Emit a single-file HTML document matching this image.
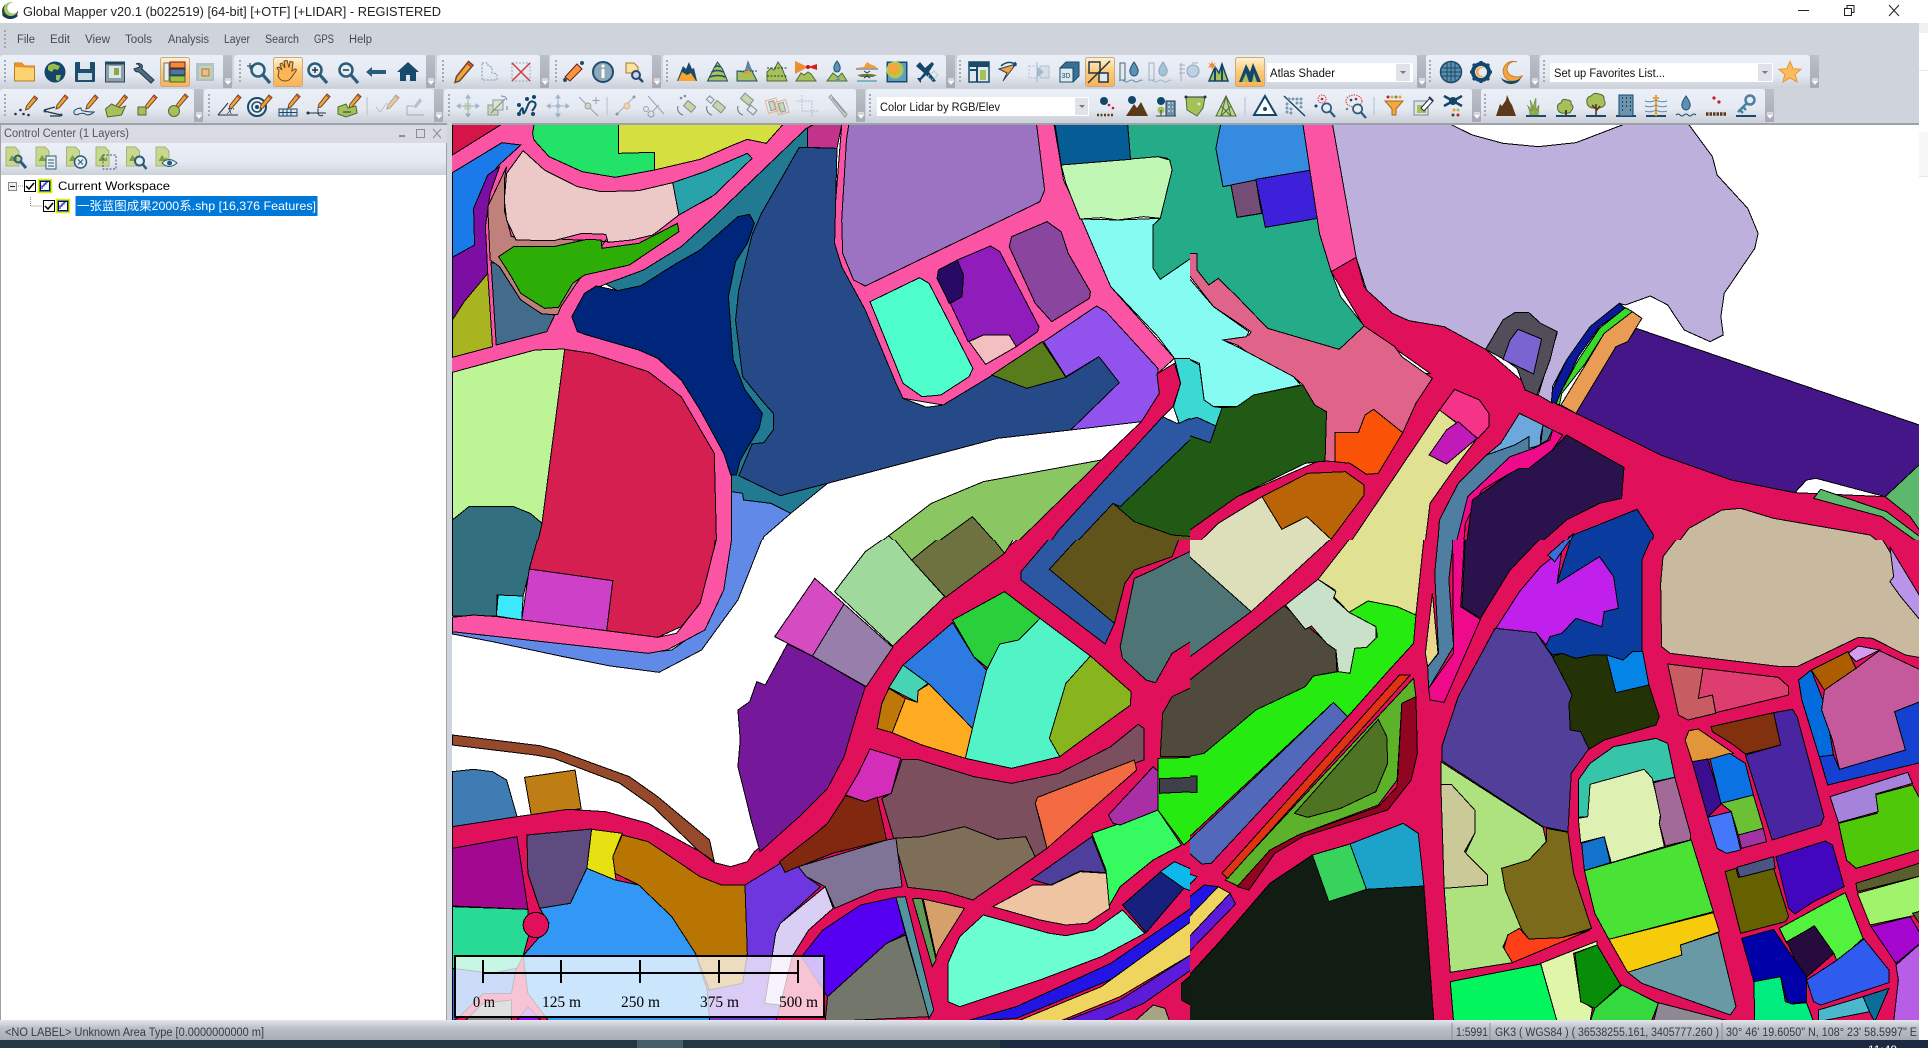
<!DOCTYPE html>
<html><head><meta charset="utf-8"><title>Global Mapper</title>
<style>
html,body{margin:0;padding:0;background:#fff;overflow:hidden}
svg{display:block}
.m polygon,.m ellipse{stroke:#000;stroke-width:1;vector-effect:non-scaling-stroke;shape-rendering:crispEdges}
text{font-family:"Liberation Sans","Noto Sans CJK SC",sans-serif}
.mn{font-size:11.5px;fill:#4a4a4a}
.sb{font-size:11.5px;fill:#3a3a3a}
.sc{font-family:"Liberation Serif",serif;font-size:16px;fill:#000}
</style></head><body>
<svg xmlns="http://www.w3.org/2000/svg" width="1928" height="1048" viewBox="0 0 1928 1048">
<defs>
<linearGradient id="tb" x1="0" y1="0" x2="0" y2="1"><stop offset="0" stop-color="#ebeff8"/><stop offset=".6" stop-color="#e5e9f2"/><stop offset="1" stop-color="#ccd0d9"/></linearGradient>
<linearGradient id="st" x1="0" y1="0" x2="0" y2="1"><stop offset="0" stop-color="#bcc0c9"/><stop offset="1" stop-color="#a6aab4"/></linearGradient>
<linearGradient id="hl" x1="0" y1="0" x2="0" y2="1"><stop offset="0" stop-color="#fff3d2"/><stop offset=".5" stop-color="#fdc878"/><stop offset="1" stop-color="#fbb157"/></linearGradient>
<linearGradient id="sb" x1="0" y1="0" x2="0" y2="1"><stop offset="0" stop-color="#e4e7ec"/><stop offset=".4" stop-color="#bcc0c8"/><stop offset="1" stop-color="#a8acb5"/></linearGradient>
<g id="ar"><rect x="0" y="0" width="9" height="33" fill="url(#st)" rx="1"/><path d="M2 24h6M2.500 26h5l-2.500 3z" fill="#fff" stroke="#fff"/></g>
<g id="p"><path d="M-3 3L5-7l3 2.500L-1 6l-3 1z" fill="#f2a33a" stroke="#6b4a2a"/><path d="M4-6l3 2.500" stroke="#c33" fill="none"/></g>
<g id="mg"><circle cx="-2" cy="-3" r="6.500" fill="#e3edf2" stroke="#2c5c7a" stroke-width="2.500"/><path d="M3 2l7 8" stroke="#2c5c7a" stroke-width="3.200"/></g>
<g id="f"><path d="M-9 8V-11h9l4 4V8z" fill="#c9d88f" stroke="#a3b37a"/><path d="M-6 2l3-5 3 4 2-2v4h-8z" fill="#7f9b45"/></g>
<path id="chk" d="M-4 0l3 3 5-6" fill="none" stroke="#000" stroke-width="1.500"/>
<g id="lay"><rect x="-6.500" y="-6.500" width="13" height="13" fill="#2a8f1e" stroke="#e8e800" stroke-width="1.500"/><rect x="-4.500" y="-4.500" width="9" height="9" fill="#fff" stroke="#0000aa"/><path d="M-3 3V0h2v-2h2v-2h2" fill="none" stroke="#0000aa"/></g>
</defs>

<rect width="1928" height="1048" fill="#fff"/>

<!-- MAP QUADRANT NW -->
<svg class="m" x="450" y="120" width="740" height="430" viewBox="0 0 1568 1290" preserveAspectRatio="none">
<polygon fill="#fb54a5" points="0,14 770,14 560,290 490,380 410,450 330,492 285,520 258,590 270,635 400,690 440,715 490,780 530,870 580,1000 597,1065 597,1290 0,1290"/>
<polygon fill="#fb54a5" points="830,14 1280,14 1300,180 1340,300 1400,500 1535,715 1500,760 1300,770 1150,765 1045,855 960,835 945,790 880,570 830,440 810,370"/>
<polygon fill="#d5154a" points="5,14 108,14 5,105"/>
<polygon fill="#23e268" points="178,14 357,14 357,100 433,97 433,150 350,172 280,155 210,110 178,60 175,40"/>
<polygon fill="#d5e040" points="357,14 705,14 670,70 630,58 600,75 530,118 433,150 433,97 357,100"/>
<polygon fill="#1b7ae9" points="5,158 110,68 150,75 100,140 75,200 50,265 52,375 5,412"/>
<polygon fill="#7d0ea4" points="5,412 52,375 50,265 80,165 105,140 85,220 75,320 80,460 30,545 5,600"/>
<polygon fill="#a8b520" points="5,600 30,545 80,460 90,680 5,712"/>
<polygon fill="#436c8c" points="87,428 100,430 150,540 195,580 222,585 205,635 98,675"/>
<polygon fill="#c0807c" points="120,140 80,260 85,420 105,440 150,540 195,582 228,584 235,560 330,360 530,250 555,230 480,280 340,365 130,350 115,270 115,180"/>
<polygon fill="#ecc9c6" points="155,92 200,150 270,200 320,215 400,212 472,188 485,285 430,345 385,360 335,367 330,343 280,340 220,362 140,360 120,300 115,240 120,160"/>
<polygon fill="#2cae06" points="103,410 135,380 220,380 290,358 320,360 322,385 400,370 482,310 485,335 380,435 285,465 260,490 230,562 200,565 150,520 130,470"/>
<polygon fill="#29a2ab" points="472,188 540,155 630,100 640,115 560,225 485,285"/>
<polygon fill="#217a91" points="755,25 770,14 800,85 800,1090 722,1180 680,1150 622,1140 620,1120 597,1115 597,1065 600,800 355,512 330,492 410,450 490,380 560,290"/>
<polygon fill="#00267c" points="285,520 310,498 355,512 405,497 480,430 530,390 610,290 635,283 645,310 630,370 605,425 590,530 600,720 625,810 662,880 655,925 615,1020 607,1065 595,1065 580,1000 530,870 490,780 440,715 400,690 290,645 270,635 258,590"/>
<polygon fill="#264a88" points="740,82 820,85 815,370 830,440 880,570 945,790 960,835 1010,862 1045,855 1150,765 1222,805 1305,772 1375,710 1418,788 1315,930 1160,955 800,1090 700,1127 612,1067 620,1040 640,972 665,968 685,930 685,880 660,840 620,770 605,600 612,510 640,345 660,280"/>
<polygon fill="#c2338c" points="757,25 770,14 830,14 820,85 757,82"/>
<polygon fill="#9c72c2" points="845,14 1243,14 1260,210 1250,245 1170,300 880,498 855,480 832,400 830,300 840,60"/>
<polygon fill="#8a459f" points="1190,350 1265,305 1295,335 1310,400 1357,515 1355,535 1275,605 1240,550 1185,380"/>
<polygon fill="#901dbb" points="1075,420 1145,378 1165,395 1248,620 1245,635 1200,680 1185,645 1130,645 1098,665 1060,550 1085,530 1085,460"/>
<polygon fill="#270a66" points="1035,450 1075,420 1088,465 1085,530 1058,550 1032,475"/>
<polygon fill="#f3bfc0" points="1100,665 1130,645 1185,645 1200,680 1135,733"/>
<polygon fill="#4effcb" points="890,545 995,473 1015,490 1108,745 1100,770 1040,825 1000,830 960,790"/>
<polygon fill="#587c1c" points="1148,765 1255,665 1305,772 1222,805"/>
<polygon fill="#9152ee" points="1258,665 1370,558 1390,575 1500,745 1503,820 1465,905 1315,930 1418,788 1375,710 1305,770"/>
<polygon fill="#e0105a" points="1498,762 1535,730 1548,790 1532,860 1510,890 1290,1230 1260,1290 1185,1290 1380,1020 1465,905 1503,820"/>
<polygon fill="#2c57a2" points="1510,890 1540,910 1575,890 1575,950 1420,1160 1310,1290 1260,1290 1290,1230"/>
<polygon fill="#205a15" points="1575,950 1575,1250 1530,1245 1450,1205 1405,1150 1420,1160"/>
<polygon fill="#60541a" points="1405,1150 1450,1205 1530,1245 1575,1250 1575,1290 1312,1290"/>
<polygon fill="#86fbf1" points="1338,297 1415,300 1505,295 1490,315 1490,445 1505,478 1575,410 1575,715 1535,715 1500,650 1400,500 1360,370"/>
<polygon fill="#3bd8d4" points="1535,715 1575,715 1575,890 1545,910 1533,860 1548,790"/>
<polygon fill="#24ac88" points="1436,14 1575,14 1575,410 1505,478 1490,445 1490,315 1505,295 1530,150 1520,115 1500,110 1442,118"/>
<polygon fill="#c1f7b5" points="1295,135 1500,110 1525,120 1530,150 1505,295 1470,290 1415,300 1380,293 1335,297 1305,190"/>
<polygon fill="#065c94" points="1282,14 1436,14 1442,118 1295,135"/>
<polygon fill="#bdf495" points="5,757 180,690 243,687 215,1000 195,1210 170,1180 135,1160 70,1160 40,1160 5,1200"/>
<polygon fill="#d41f50" points="243,688 300,700 420,755 490,830 560,1000 565,1290 182,1290 195,1210"/>
<polygon fill="#326f7f" points="5,1200 40,1160 135,1160 170,1180 195,1210 182,1290 5,1290"/>
<polygon fill="#6189e7" points="597,1115 620,1120 622,1140 680,1150 722,1180 665,1250 655,1290 597,1290"/>
<polygon fill="#8ac763" points="890,1290 1020,1150 1130,1085 1380,1020 1185,1290 1170,1290 1107,1190 1010,1290"/>
<polygon fill="#6d7240" points="1010,1290 1107,1190 1170,1290"/>
<polygon fill="#9fd99c" points="890,1290 930,1247 958,1290"/>
</svg>

<!-- MAP QUADRANT NE -->
<svg class="m" x="1190" y="120" width="738" height="430" viewBox="0 0 1568 1290" preserveAspectRatio="none">
<polygon fill="#e0105a" points="300,455 353,412 370,500 430,580 540,620 628,688 740,825 820,880 900,935 1000,1005 1150,1080 1285,1118 1477,1130 1560,1190 1560,1300 -5,1300 -5,1210 100,1130 270,1025 285,1025 290,870 420,770 510,760 370,620"/>
<polygon fill="#24ac88" points="-5,14 65,14 55,85 70,200 87,195 100,292 155,280 160,322 272,295 280,340 300,455 320,530 370,618 317,688 165,625 100,530 60,475 40,495 15,450 15,400 -5,400"/>
<polygon fill="#358bdf" points="65,14 240,14 258,150 70,200 55,85"/>
<polygon fill="#734d75" points="87,195 140,180 152,280 100,292"/>
<polygon fill="#3e20db" points="140,178 258,150 272,295 160,322"/>
<polygon fill="#fb54a5" points="240,14 303,14 353,412 300,455 275,340"/>
<polygon fill="#bdb0dc" points="303,14 555,14 600,45 665,70 740,80 820,68 920,14 1060,14 1110,110 1120,165 1185,265 1207,340 1200,385 1135,520 1128,590 1133,645 1105,665 1050,630 1015,555 978,528 925,555 912,550 850,620 800,720 770,800 770,850 740,825 780,640 745,610 720,578 690,578 665,600 628,688 540,620 465,602 430,580 375,510 353,412"/>
<polygon fill="#514e59" points="628,688 665,600 690,578 720,578 745,610 780,635 765,720 737,825 712,810 695,745 670,720"/>
<polygon fill="#7964d2" points="697,628 747,657 730,762 665,718 680,660"/>
<polygon fill="#0a1a9a" points="770,810 800,720 850,620 912,550 925,565 870,620 825,710 790,810 778,850 768,845"/>
<polygon fill="#37d92a" points="778,850 790,810 825,720 870,625 925,563 940,575 880,640 840,730 790,820 785,855"/>
<polygon fill="#e89c54" points="788,855 840,735 880,640 940,575 960,595 930,665 905,680 820,880"/>
<polygon fill="#451688" points="948,625 1560,920 1560,1020 1477,1130 1330,1075 1310,1080 1285,1118 1150,1080 1000,1005 900,935 820,880 905,680 930,665"/>
<polygon fill="#5cb86a" points="1560,1020 1560,1250 1530,1190 1477,1130"/>
<polygon fill="#5cb86a" points="1340,1108 1480,1175 1560,1260 1560,1280 1470,1190 1325,1135"/>
<polygon fill="#e0648a" points="-5,400 15,400 15,450 40,495 60,475 100,530 165,625 317,688 370,618 435,680 450,710 515,775 480,850 452,938 390,868 372,885 358,937 308,938 308,1025 287,1023 290,875 265,855 240,795 220,770 150,725 100,675 70,660 125,645 130,635 50,560 -5,460"/>
<polygon fill="#86fbf1" points="-5,470 50,560 125,635 120,650 70,660 100,680 220,770 235,795 135,825 100,860 50,860 30,840 20,730 -5,715"/>
<polygon fill="#3bd8d4" points="-5,715 20,735 30,840 50,860 68,863 55,918 15,892 -5,900"/>
<polygon fill="#2c57a2" points="-5,900 15,892 55,918 43,968 -5,945"/>
<polygon fill="#205a15" points="68,863 100,860 135,825 240,795 265,855 290,875 287,1023 245,1030 100,1130 -5,1235 -5,945 43,968"/>
<polygon fill="#fa5207" points="308,938 358,937 372,885 390,868 452,938 400,1060 375,1063 340,1030 308,1025"/>
<polygon fill="#ba6307" points="153,1130 250,1060 330,1055 370,1095 370,1125 300,1258 248,1190 195,1228"/>
<polygon fill="#dcdfb9" points="-5,1300 60,1210 153,1130 195,1228 248,1190 300,1258 280,1300"/>
<polygon fill="#e0e192" points="530,870 610,955 570,1030 510,1150 497,1300 325,1300"/>
<polygon fill="#f43389" points="562,808 615,840 635,880 635,920 612,955 530,870"/>
<polygon fill="#c01ab8" points="545,930 570,905 610,955 545,1032 508,1005"/>
<polygon fill="#6ca8dc" points="700,880 750,915 745,950 745,975 720,985 720,950 690,975 630,1005 660,970"/>
<polygon fill="#4e7fa3" points="770,930 750,915 745,975 720,985 720,950 690,975 630,1005 570,1090 530,1200 525,1300 560,1300 590,1130 680,1010 730,985 760,960"/>
<polygon fill="#ee0a8a" points="770,930 792,945 770,990 720,1045 700,1045 680,1060 620,1110 585,1210 580,1300 560,1300 590,1130 680,1010 730,985 765,960"/>
<polygon fill="#2a134d" points="800,945 922,1042 917,1135 870,1150 800,1200 720,1300 585,1300 600,1140 680,1060 700,1045 720,1045 770,990"/>
<polygon fill="#0a3ca0" points="805,1250 950,1168 985,1245 975,1300 800,1300"/>
<polygon fill="#3a6ed8" points="775,1300 815,1240 800,1300"/>
<polygon fill="#c9b99f" points="1020,1300 1060,1225 1130,1170 1170,1165 1240,1195 1445,1245 1495,1300"/>
</svg>

<!-- MAP QUADRANT SW -->
<svg class="m" x="450" y="540" width="740" height="480" viewBox="0 0 1568 1440" preserveAspectRatio="none">
<rect width="1568" height="1440" fill="#fff"/>
<polygon fill="#326f7f" points="5,-5 186,-5 155,168 100,165 98,228 5,228"/>
<polygon fill="#d41f50" points="186,-5 562,-5 555,100 530,190 490,260 440,292 332,272 345,122 168,87"/>
<polygon fill="#cf40c8" points="168,87 345,122 332,272 152,240"/>
<polygon fill="#3be9fa" points="102,165 155,168 152,240 98,228"/>
<polygon fill="#6189e7" points="5,275 420,338 470,330 530,270 565,180 597,-5 662,-5 610,180 533,330 443,397 340,378 240,350 90,305 5,282"/>
<polygon fill="#fb54a5" points="5,232 50,225 100,230 440,292 480,280 530,190 565,-5 597,-5 580,150 540,270 460,330 420,340 5,275"/>
<polygon fill="#964a2b" points="5,585 190,617 225,630 380,710 440,770 550,900 560,965 530,935 525,930 430,800 360,730 220,655 180,645 5,615"/>
<polygon fill="#3f7cb4" points="5,695 50,688 90,695 120,720 142,830 5,860"/>
<polygon fill="#be7d15" points="158,712 265,690 278,806 172,825"/>
<polygon fill="#e0105a" points="5,860 142,830 250,808 330,815 420,850 530,935 560,968 595,980 630,965 645,935 720,850 780,745 820,650 860,500 890,400 930,315 1040,175 1170,35 1205,-5 1575,-5 1575,1445 5,1445"/>
<polygon fill="#75199a" points="715,312 770,350 880,440 860,530 835,650 800,745 740,830 657,935 640,850 610,680 615,600 610,510 635,485 650,425 668,435"/>
<polygon fill="#d44bc2" points="773,115 835,192 768,348 688,290"/>
<polygon fill="#977eab" points="835,192 938,322 882,440 768,348"/>
<polygon fill="#9fd99c" points="920,-5 940,-5 978,60 1048,170 938,318 815,155 880,35"/>
<polygon fill="#8ac763" points="940,-5 1035,-5 978,60"/>
<polygon fill="#8ac763" points="1150,-5 1195,-5 1175,40"/>
<polygon fill="#6d7240" points="978,60 1035,-5 1150,-5 1175,40 1050,172"/>
<polygon fill="#2c57a2" points="1270,-5 1330,-5 1270,88 1408,250 1388,312 1210,120 1210,95"/>
<polygon fill="#60541a" points="1330,-5 1545,-5 1530,50 1450,90 1430,130 1408,250 1270,88"/>
<polygon fill="#4f7475" points="1450,115 1490,90 1530,60 1575,30 1575,300 1530,340 1495,428 1475,420 1425,355 1420,320"/>
<polygon fill="#4f4a3c" points="1575,440 1530,470 1510,520 1505,650 1575,650"/>
<polygon fill="#2ad03c" points="1065,240 1175,155 1250,235 1205,300 1165,312 1150,397 1110,350"/>
<polygon fill="#2d7be0" points="960,375 1065,248 1110,350 1137,390 1107,565 1015,432"/>
<polygon fill="#47d4b3" points="960,375 1013,430 992,452 990,487 930,443"/>
<polygon fill="#53f3c8" points="1250,235 1357,348 1305,430 1270,595 1292,650 1190,685 1092,655 1107,565 1137,390 1165,312 1205,300"/>
<polygon fill="#88b41e" points="1357,348 1443,455 1442,495 1330,610 1292,650 1270,595 1305,430"/>
<polygon fill="#bf7707" points="930,445 965,475 937,578 905,565 915,490"/>
<polygon fill="#ffab22" points="1015,432 1107,565 1092,655 1000,615 937,578 965,475 990,487 992,452"/>
<polygon fill="#d42dba" points="890,627 955,655 935,760 880,785 838,765 865,700"/>
<polygon fill="#7b4f5e" points="958,658 990,658 1110,710 1190,730 1290,700 1400,620 1458,553 1470,565 1470,660 1250,770 1240,790 1265,925 1240,950 1220,890 1160,898 1090,860 1000,890 940,895 915,775 935,760"/>
<polygon fill="#f46a42" points="1245,772 1450,660 1455,690 1265,925 1250,840 1240,790"/>
<polygon fill="#832810" points="838,767 880,785 905,772 925,900 810,940 710,997 698,965 775,880 800,850"/>
<polygon fill="#7e6e58" points="940,895 1000,890 1090,860 1160,898 1220,890 1240,950 1108,1080 1050,1055 970,1042"/>
<polygon fill="#7f7495" points="925,900 945,895 958,1040 905,1050 815,1105 795,1040 755,1010 738,980"/>
<polygon fill="#6e36df" points="625,1035 700,970 710,997 738,980 755,1010 785,1040 700,1150 690,1180 690,1250 630,1250"/>
<polygon fill="#6e36df" points="630,1250 690,1250 667,1390 700,1395 690,1445 545,1445 545,1350 620,1330"/>
<polygon fill="#d9cff5" points="795,1040 812,1105 760,1170 725,1250 700,1395 667,1390 690,1180 700,1150"/>
<polygon fill="#b87502" points="365,885 420,905 530,1010 575,1035 625,1035 630,1240 620,1330 550,1350 520,1240 470,1130 400,1035 350,1000 345,950"/>
<polygon fill="#e7e012" points="300,868 365,880 345,950 352,1022 290,985"/>
<polygon fill="#5e4c80" points="163,885 300,867 290,985 255,1090 190,1105 165,1000"/>
<polygon fill="#a20890" points="5,925 142,890 165,1108 5,1098"/>
<polygon fill="#27db97" points="5,1100 165,1108 168,1180 155,1247 140,1290 90,1300 5,1285"/>
<polygon fill="#3373e7" points="5,1285 90,1300 140,1285 130,1360 70,1360 20,1430 5,1445"/>
<polygon fill="#3398f5" points="190,1105 255,1090 290,985 350,1020 400,1035 470,1130 520,1240 545,1350 550,1445 210,1445 165,1360 155,1247 190,1190 210,1150"/>
<polygon fill="#848484" points="30,1445 70,1390 130,1380 130,1445"/>
<polygon fill="#8f10f0" points="165,1400 195,1445 140,1445"/>
<ellipse cx="182" cy="1155" rx="27" ry="38" fill="#e0105a"/>
<polygon fill="#5500f0" points="945,1072 965,1180 925,1210 800,1370 745,1250 790,1170 870,1095"/>
<polygon fill="#73766a" points="965,1185 1015,1430 795,1445 800,1370 925,1210"/>
<polygon fill="#50949f" points="945,1072 965,1070 1025,1410 1015,1435"/>
<polygon fill="#5d9a58" points="980,1075 1000,1075 1030,1260 1022,1280"/>
<polygon fill="#d6a06a" points="1003,1077 1090,1105 1035,1230 1030,1250"/>
<polygon fill="#efc4a3" points="1150,1100 1235,1035 1275,1035 1335,995 1392,1000 1398,1105 1350,1150 1305,1155 1250,1140"/>
<polygon fill="#4e3f9d" points="1232,1018 1360,890 1390,998 1335,993 1273,1035"/>
<polygon fill="#35fa60" points="1360,880 1500,810 1550,915 1490,960 1420,1040 1397,1097 1390,990"/>
<polygon fill="#aa2ea6" points="1395,825 1490,680 1505,700 1500,810 1420,855 1405,850"/>
<polygon fill="#26eb10" points="1500,655 1575,652 1575,890 1555,915 1500,810"/>
<polygon fill="#40404a" points="1503,716 1575,712 1575,755 1503,760"/>
<polygon fill="#6bffcf" points="1130,1125 1270,1180 1305,1187 1365,1170 1425,1110 1472,1180 1380,1250 1250,1320 1080,1400 1055,1385 1055,1270 1080,1190"/>
<polygon fill="#17207c" points="1425,1095 1510,990 1555,1045 1475,1178"/>
<polygon fill="#0eb7ec" points="1505,995 1535,965 1575,990 1575,1055 1555,1045"/>
<polygon fill="#2214e4" points="1090,1445 1200,1400 1400,1270 1575,1100 1575,1160 1450,1290 1200,1435"/>
<polygon fill="#efd45e" points="1200,1445 1380,1340 1575,1140 1575,1240 1420,1370 1290,1445"/>
<polygon fill="#5d1ad8" points="1300,1445 1420,1380 1575,1240 1575,1285 1470,1390 1380,1445"/>
<polygon fill="#a5a584" points="1450,1445 1490,1395 1515,1405 1525,1445"/>
<polygon fill="#101b12" points="1575,1300 1550,1330 1550,1380 1575,1400"/>
</svg>

<!-- MAP QUADRANT SE -->
<svg class="m" x="1190" y="540" width="738" height="480" viewBox="0 0 1568 1440" preserveAspectRatio="none">
<rect width="1568" height="1440" fill="#e0105a"/>
<polygon fill="#dcdfb9" points="-5,-5 300,-5 130,215 -5,45"/>
<polygon fill="#4f7475" points="-5,45 130,215 -5,355"/>
<polygon fill="#e0e192" points="340,-5 497,-5 480,225 440,200 378,183 338,217 305,170 308,150 272,118"/>
<polygon fill="#4f4a3c" points="200,197 258,268 310,330 312,395 262,408 245,440 140,510 30,640 -5,650 -5,425"/>
<polygon fill="#26eb10" points="338,217 378,183 440,200 480,225 475,310 420,395 335,530 305,487 -5,895 -5,650 30,640 140,510 245,440 262,408 315,395 340,400 350,325 375,322 398,290 395,260"/>
<polygon fill="#c8e1c8" points="272,118 310,155 305,175 338,217 395,260 395,295 375,322 350,325 340,400 315,395 310,330 290,310 258,258 245,268 203,195"/>
<polygon fill="#40404a" points="-5,708 15,708 15,757 -5,757"/>
<polygon fill="#5268bb" points="-5,905 305,487 335,530 45,970 25,972 -5,935"/>
<polygon fill="#5cb32a" points="75,1020 475,415 480,470 450,490 440,720 400,795 230,885 170,930 105,1040"/>
<polygon fill="#e13213" points="68,1000 445,405 468,405 80,1015"/>
<polygon fill="#920520" points="100,1040 170,930 230,885 400,800 440,740 450,490 480,470 483,640 470,720 420,810 330,850 240,890 180,940 125,1050"/>
<polygon fill="#4e7322" points="222,820 400,538 418,590 420,670 395,755 320,805 250,832"/>
<polygon fill="#111c12" points="-5,1310 60,1210 170,1030 260,945 295,1085 375,1048 497,1038 518,1445 -5,1445"/>
<polygon fill="#37d35c" points="260,945 340,912 375,1048 295,1085"/>
<polygon fill="#1da2ca" points="340,912 453,850 485,880 497,1038 375,1048"/>
<polygon fill="#0eb7ec" points="-5,1000 15,1010 -5,1040"/>
<polygon fill="#2214e4" points="-5,1075 30,1035 60,1040 -5,1135"/>
<polygon fill="#efd45e" points="-5,1135 60,1040 85,1060 -5,1195"/>
<polygon fill="#5d1ad8" points="-5,1195 85,1060 97,1092 -5,1240"/>
<polygon fill="#4e7fa3" points="527,-5 560,-5 550,120 560,320 507,445 505,380 528,340 520,100"/>
<polygon fill="#ead98c" points="515,160 527,340 505,380 500,340"/>
<polygon fill="#ee0a8a" points="558,-5 583,-5 575,200 617,238 540,487 510,480 507,445 560,340"/>
<polygon fill="#2a134d" points="585,-5 745,-5 680,90 617,235 578,200"/>
<polygon fill="#c120ec" points="650,265 700,155 745,80 790,30 780,130 870,50 900,110 910,205 880,215 875,260 820,235 790,280 765,290 760,320 735,278"/>
<polygon fill="#0a3ca0" points="810,-5 980,-5 960,60 960,335 940,335 920,360 885,345 855,345 820,355 790,340 770,345 755,320 765,290 790,280 820,235 875,260 880,215 910,205 900,110 870,50 780,130"/>
<polygon fill="#3a6ed8" points="760,45 800,-5 810,-5 775,65"/>
<polygon fill="#523f9a" points="648,265 735,278 770,350 808,440 848,625 810,700 803,875 750,860 535,662 535,620 570,470"/>
<polygon fill="#243306" points="770,350 790,340 820,355 855,345 885,345 905,458 975,435 997,530 990,555 880,600 848,628 830,575 808,570 805,490 812,465"/>
<polygon fill="#0584e8" points="885,345 920,360 940,335 962,335 975,435 905,458"/>
<polygon fill="#c9b99f" points="1035,-5 1470,-5 1510,90 1560,230 1560,355 1520,345 1450,295 1420,292 1290,380 1255,380 1020,340 1002,320 1000,130 1005,50"/>
<polygon fill="#b995ea" points="1487,20 1560,190 1560,255 1510,170 1487,125 1495,110"/>
<polygon fill="#d39ced" points="1398,340 1420,318 1465,330 1415,365"/>
<polygon fill="#c75c62" points="1015,372 1090,385 1080,475 1110,465 1117,520 1058,540 1038,525"/>
<polygon fill="#de3d6f" points="1090,385 1250,412 1272,440 1272,465 1117,518 1110,465 1080,475"/>
<polygon fill="#ac5d00" points="1320,390 1398,335 1415,385 1348,450"/>
<polygon fill="#036cdc" points="1293,420 1320,390 1350,500 1367,645 1337,650 1300,480"/>
<polygon fill="#c45a9c" points="1348,450 1415,385 1465,332 1560,395 1560,480 1497,515 1520,630 1380,688 1365,600 1342,510"/>
<polygon fill="#1441d1" points="1497,515 1560,480 1560,665 1355,735 1337,650 1367,645 1380,688 1520,630"/>
<polygon fill="#82310f" points="1107,560 1240,518 1255,615 1180,642 1150,610 1110,575"/>
<polygon fill="#4a25a1" points="1240,518 1280,508 1290,530 1347,830 1340,855 1237,900 1180,645 1255,615"/>
<polygon fill="#e39539" points="1060,572 1080,567 1155,640 1105,657 1067,665 1052,600"/>
<polygon fill="#390f8f" points="1067,665 1100,657 1130,790 1100,832"/>
<polygon fill="#0b72e4" points="1105,657 1147,640 1180,670 1197,765 1128,790"/>
<polygon fill="#6ac136" points="1128,790 1197,765 1218,865 1165,885 1150,815"/>
<polygon fill="#4378fb" points="1100,832 1150,815 1170,930 1140,940 1120,925"/>
<polygon fill="#a034a4" points="1165,885 1218,865 1225,905 1172,925"/>
<polygon fill="#36c5a8" points="990,595 1015,610 1030,712 985,725 965,690 850,735 845,830 825,832 825,720 850,670 900,620"/>
<polygon fill="#def1b3" points="850,733 965,688 982,715 1000,820 997,850 1008,920 895,968 880,890 830,908 825,835 845,830"/>
<polygon fill="#a26a97" points="985,728 1030,712 1063,880 1063,900 1010,918 997,850 1000,830"/>
<polygon fill="#1272cc" points="832,910 880,890 893,968 838,992"/>
<polygon fill="#4be236" points="838,992 1065,900 1112,1115 890,1198 860,1120"/>
<polygon fill="#f5cb0c" points="890,1198 1112,1118 1125,1175 1042,1215 1045,1245 930,1297"/>
<polygon fill="#6a99a6" points="930,1297 1045,1245 1042,1215 1122,1178 1160,1400 1148,1425 960,1330"/>
<polygon fill="#aee27f" points="533,665 750,862 757,905 720,960 662,985 670,1050 705,1170 675,1190 665,1220 685,1268 553,1297 540,1045 632,1035 625,1000 585,940 605,880 600,810 555,735 533,733"/>
<polygon fill="#7a6a1a" points="757,865 803,877 815,1000 853,1165 790,1193 720,1197 705,1170 670,1050 662,985 720,960 757,905"/>
<polygon fill="#cbc998" points="533,733 555,733 605,810 605,880 583,935 632,1005 632,1035 540,1045"/>
<polygon fill="#ff3f17" points="675,1185 700,1165 720,1197 790,1193 850,1170 685,1268 667,1225"/>
<polygon fill="#02f55c" points="553,1325 745,1272 780,1445 560,1445"/>
<polygon fill="#dff5a8" points="745,1270 865,1203 865,1215 815,1240 830,1380 855,1405 850,1445 780,1445"/>
<polygon fill="#078d08" points="818,1240 865,1215 915,1335 860,1405 830,1385"/>
<polygon fill="#34d93e" points="918,1335 995,1390 980,1445 850,1445 860,1405"/>
<polygon fill="#8e8893" points="995,1388 1150,1445 985,1445"/>
<polygon fill="#656000" points="1137,995 1160,985 1165,1012 1240,985 1272,1130 1265,1145 1170,1180"/>
<polygon fill="#4b5583" points="1162,982 1240,950 1243,985 1168,1012"/>
<polygon fill="#4106be" points="1245,950 1350,903 1365,915 1390,1040 1325,1085 1285,1122 1272,1105"/>
<polygon fill="#53f23e" points="1252,1165 1330,1105 1392,1058 1430,1195 1375,1265 1368,1240 1325,1158 1268,1210"/>
<polygon fill="#270a3e" points="1268,1205 1327,1158 1368,1240 1305,1318"/>
<polygon fill="#2f5bef" points="1310,1320 1370,1265 1432,1197 1485,1290 1485,1328 1340,1395 1325,1385"/>
<polygon fill="#0000a8" points="1172,1195 1240,1168 1255,1200 1310,1310 1310,1385 1270,1392 1255,1310 1198,1325"/>
<polygon fill="#01ec7e" points="1198,1325 1255,1310 1265,1385 1280,1392 1310,1388 1325,1445 1200,1445"/>
<polygon fill="#5a5e2e" points="1415,1030 1560,965 1560,1005 1418,1055"/>
<polygon fill="#a1f36b" points="1418,1060 1560,1005 1560,1120 1445,1155"/>
<polygon fill="#a607cf" points="1447,1160 1530,1130 1560,1200 1500,1270"/>
<polygon fill="#5a5e2e" points="1535,1120 1560,1110 1560,1170"/>
<polygon fill="#b85de5" points="1500,1275 1560,1200 1560,1445 1495,1445 1505,1320"/>
<polygon fill="#4bb7cb" points="1335,1410 1430,1370 1445,1415 1335,1445"/>
<polygon fill="#0a6e98" points="1430,1370 1485,1345 1455,1445 1445,1420"/>
<polygon fill="#4fc80a" points="1378,850 1460,820 1455,765 1535,735 1560,800 1560,925 1415,985 1395,960"/>
<polygon fill="#a583db" points="1360,770 1525,697 1535,730 1457,762 1462,815 1378,848"/>
</svg>

<!-- scale bar -->
<rect x="455" y="956" width="369" height="61" fill="#fff" fill-opacity=".75" stroke="#000" stroke-width="2"/>
<path d="M483 973H798M483 960V983M561 960V983M640 960V983M719 960V983M798 960V983" stroke="#000" stroke-width="2" fill="none"/>
<text class="sc" x="473" y="1007" textLength="22" lengthAdjust="spacingAndGlyphs">0 m</text>
<text class="sc" x="542" y="1007" textLength="39" lengthAdjust="spacingAndGlyphs">125 m</text>
<text class="sc" x="621" y="1007" textLength="39" lengthAdjust="spacingAndGlyphs">250 m</text>
<text class="sc" x="700" y="1007" textLength="39" lengthAdjust="spacingAndGlyphs">375 m</text>
<text class="sc" x="779" y="1007" textLength="39" lengthAdjust="spacingAndGlyphs">500 m</text>

<!-- chrome masks -->
<rect x="1919" y="23" width="9" height="1025" fill="#fff"/>
<rect x="1919" y="23" width="9" height="10" fill="#f0f0f0"/>
<rect x="1919" y="70" width="9" height="1" fill="#e6e6e6"/>
<rect x="1919" y="132" width="9" height="44" fill="#f7f7f7"/>
<rect x="1919" y="176" width="9" height="1" fill="#e6e6e6"/>
<rect x="0" y="0" width="1928" height="23" fill="#fff"/>
<rect x="0" y="23" width="1919" height="101" fill="#cfd3db"/>
<rect x="0" y="123" width="1919" height="2" fill="#9da1aa"/>
<rect x="447" y="122" width="5" height="900" fill="#d0d4dc"/>

<!-- title bar -->
<g transform="translate(10,11)"><circle r="8" fill="#2e4a1e"/><circle cx="1" cy="-2" r="7" fill="#a7c47a"/><circle cx="3" cy="-3" r="5.500" fill="#fff"/><path d="M-7 3a8 6 0 0 0 14 1" stroke="#123a5a" stroke-width="2.500" fill="none"/></g>
<text x="23" y="16" font-size="13" fill="#222" textLength="418" lengthAdjust="spacingAndGlyphs">Global Mapper v20.1 (b022519) [64-bit] [+OTF] [+LIDAR] - REGISTERED</text>
<path d="M1798 10.500H1809" stroke="#222" stroke-width="1"/>
<path d="M1844.500 8.500h7v7h-7zM1847 8.500v-3h7v7h-2.500" stroke="#222" fill="none"/>
<path d="M1889 5l10 11M1899 5l-10 11" stroke="#222" fill="none"/>

<!-- menu bar -->
<path d="M5 30V48" stroke="#a2a6b0" stroke-width="2" stroke-dasharray="2 2"/>
<text class="mn" x="17" y="43" textLength="18" lengthAdjust="spacingAndGlyphs">File</text>
<text class="mn" x="50" y="43" textLength="20" lengthAdjust="spacingAndGlyphs">Edit</text>
<text class="mn" x="85" y="43" textLength="25" lengthAdjust="spacingAndGlyphs">View</text>
<text class="mn" x="125" y="43" textLength="27" lengthAdjust="spacingAndGlyphs">Tools</text>
<text class="mn" x="168" y="43" textLength="41" lengthAdjust="spacingAndGlyphs">Analysis</text>
<text class="mn" x="224" y="43" textLength="26" lengthAdjust="spacingAndGlyphs">Layer</text>
<text class="mn" x="265" y="43" textLength="34" lengthAdjust="spacingAndGlyphs">Search</text>
<text class="mn" x="314" y="43" textLength="20" lengthAdjust="spacingAndGlyphs">GPS</text>
<text class="mn" x="349" y="43" textLength="23" lengthAdjust="spacingAndGlyphs">Help</text>

<!-- toolbar groups row 1 -->
<g fill="url(#tb)">
<rect x="0" y="55" width="224" height="33" rx="3"/><rect x="234" y="55" width="193" height="33" rx="3"/><rect x="437" y="55" width="103" height="33" rx="3"/><rect x="550" y="55" width="102" height="33" rx="3"/><rect x="663" y="55" width="283" height="33" rx="3"/><rect x="957" y="55" width="460" height="33" rx="3"/><rect x="1426" y="55" width="104" height="33" rx="3"/><rect x="1540" y="55" width="270" height="33" rx="3"/>
<rect x="0" y="89" width="194" height="33" rx="3"/><rect x="204" y="89" width="230" height="33" rx="3"/><rect x="444" y="89" width="412" height="33" rx="3"/><rect x="866" y="89" width="606" height="33" rx="3"/><rect x="1481" y="89" width="284" height="33" rx="3"/>
</g>
<use href="#ar" x="223" y="55"/><use href="#ar" x="426" y="55"/><use href="#ar" x="540" y="55"/><use href="#ar" x="652" y="55"/><use href="#ar" x="946" y="55"/><use href="#ar" x="1417" y="55"/><use href="#ar" x="1530" y="55"/><use href="#ar" x="1810" y="55"/>
<use href="#ar" x="194" y="89"/><use href="#ar" x="434" y="89"/><use href="#ar" x="856" y="89"/><use href="#ar" x="1472" y="89"/><use href="#ar" x="1765" y="89"/>
<g stroke="#a6aab4" stroke-width="2" stroke-dasharray="2 2" fill="none">
<path d="M5 60V84M240 60V84M443 60V84M556 60V84M667 60V84M960 60V84M1430 60V84M1544 60V84"/>
<path d="M5 94V118M209 94V118M449 94V118M870 94V118M1485 94V118"/>
</g>
<path d="M367 97V115M607 97V115M1245 97V115M1374 97V115" stroke="#b8bcc5"/>

<!-- highlights -->
<g fill="url(#hl)" stroke="#c6ab84">
<rect x="160.500" y="57.500" width="29" height="29" rx="2"/><rect x="273.500" y="57.500" width="29" height="29" rx="2"/><rect x="1085.500" y="57.500" width="29" height="29" rx="2"/><rect x="1235.500" y="57.500" width="29" height="29" rx="2"/>
</g>

<!-- combos -->
<rect x="1267" y="63" width="146" height="19" fill="#fff"/><rect x="1396" y="64" width="14" height="17" fill="#dfe2e9"/><path d="M1400 71h6l-3 3z" fill="#777"/>
<text x="1270" y="77" font-size="11.500" fill="#111" textLength="65" lengthAdjust="spacingAndGlyphs">Atlas Shader</text>
<rect x="1550" y="63" width="223" height="19" fill="#fff"/><rect x="1758" y="64" width="14" height="17" fill="#dfe2e9"/><path d="M1762 71h6l-3 3z" fill="#777"/>
<text x="1554" y="77" font-size="11.500" fill="#111" textLength="111" lengthAdjust="spacingAndGlyphs">Set up Favorites List...</text>
<rect x="877" y="97" width="212" height="19" fill="#fff"/><rect x="1075" y="98" width="13" height="17" fill="#dfe2e9"/><path d="M1079 105h6l-3 3z" fill="#777"/>
<text x="880" y="111" font-size="11.500" fill="#111" textLength="120" lengthAdjust="spacingAndGlyphs">Color Lidar by RGB/Elev</text>

<!-- ROW 1 ICONS -->
<g transform="translate(0,72)">
<g transform="translate(24.500,0)"><path d="M-10 9V-9h7l3 3h10V9z" fill="#fdd36f" stroke="#b57a2a"/><path d="M-10-5V-9h7l3 3h10v2z" fill="#f0902a"/></g>
<g transform="translate(55,0)"><circle r="10.500" fill="#12476b"/><path d="M-7-6q5-4 9-1l3 1-2 4-4-1-2 3-4-2zM1 3l5 0-2 6-3-1z" fill="#9dbb4a"/></g>
<g transform="translate(85,0)"><rect x="-10" y="-10" width="20" height="20" rx="1" fill="#1f4d70"/><rect x="-5" y="-10" width="10" height="7" fill="#dfe9ee"/><rect x="-7" y="1" width="14" height="7" fill="#c9dbe5"/></g>
<g transform="translate(115,0)"><rect x="-9.500" y="-10" width="19" height="20" fill="#8ba0ad" stroke="#345"/><rect x="-9.500" y="-10" width="19" height="2.500" fill="#23455f"/><rect x="-6" y="-6" width="12" height="12" fill="#dfe7e4"/><rect x="-1" y="-4" width="5" height="7" fill="#89a84e"/></g>
<g transform="translate(145,0)"><path d="M-9-8a5 5 0 0 1 6 1c1 2 0 3 0 4l12 11-3 3L-6 0c-2 0-4 0-5-3l3-1 3-1-2-3z" fill="#4d6f85" stroke="#234"/></g>
<g transform="translate(175,0)"><rect x="-11" y="-9" width="5" height="18" fill="#e9f0e0" stroke="#678"/><rect x="-5" y="-10" width="15" height="6" fill="#ef8f2c" stroke="#714"/><rect x="-5" y="-3" width="15" height="6" fill="#4d7796" stroke="#234"/><rect x="-5" y="4" width="15" height="6" fill="#9cc04a" stroke="#463"/></g>
<g transform="translate(205,0)" opacity=".75"><rect x="-9" y="-9" width="18" height="18" fill="#a0b4bf"/><rect x="-6" y="-6" width="13" height="13" fill="#b9cf86"/><rect x="-3" y="-3" width="7" height="7" fill="#e5b56a" stroke="#b53a2a"/></g>
<g transform="translate(258,0)"><use href="#mg" transform="translate(2,1)"/><path d="M-11-6h6M-8-9v6" stroke="#234"/></g>
<g transform="translate(288,0)"><path d="M-9-1l-2-3 2-1 3 3-2-6 2-1 3 5-1-7 3-.5 2 7 1-6 3 .5-1 9q3-2 3-2 2 0 1 2l-5 7q-2 3-6 3-5 0-7-5z" fill="#fdb556" stroke="#634a1c"/></g>
<g transform="translate(317,0)"><use href="#mg" transform="translate(0,1)"/><path d="M-5-2h6M-2-5v6" stroke="#234" stroke-width="1.500"/></g>
<g transform="translate(348,0)"><use href="#mg" transform="translate(0,1)"/><path d="M-5-2h6" stroke="#234" stroke-width="1.500"/></g>
<path transform="translate(377,0)" d="M-11 0l6-5v3h14v4H-5v3z" fill="#2a5a7c"/>
<path transform="translate(408,0)" d="M0-10L-11 0h3v9h6V3h4v6h6V0h3z" fill="#1a4a6b"/>
<g transform="translate(461,0) scale(1.500)"><use href="#p"/></g>
<path transform="translate(491,0)" d="M-9-9h6v3l4 1v6l5 1v6H-9z" fill="none" stroke="#7e9ab5" stroke-dasharray="2 1.500"/>
<g transform="translate(521,0)"><rect x="-9" y="-9" width="18" height="18" fill="none" stroke="#9ab" stroke-dasharray="2 1.500"/><path d="M-9-9L9 9M9-9L-9 9" stroke="#d33a3a" stroke-width="1.500"/></g>
<g transform="translate(573,0)"><path d="M-8 5L4-8l5 5L-3 9z" fill="#f09a34" stroke="#713"/><circle cx="-8" cy="8" r="2" fill="#1f4d70"/><circle cx="9" cy="-9" r="2" fill="#1f4d70"/></g>
<g transform="translate(603,0)"><circle r="10" fill="#8ea9ba" stroke="#1f4d70" stroke-width="2"/><rect x="-1.500" y="-3" width="3" height="9" fill="#fff"/><circle cy="-6" r="1.600" fill="#fff"/></g>
<g transform="translate(633,0)"><path d="M-7-9h8l4 4v6h-12z" fill="#fde3a0" stroke="#9a7a34"/><circle cx="3" cy="3" r="4" fill="#dce" stroke="#1f4d70" stroke-width="2"/><path d="M6 6l4 4" stroke="#1f4d70" stroke-width="2.500"/></g>
<g transform="translate(687,0)"><path d="M-10 9L-4-6l3 3 3-7 3 7 2-1 3 13z" fill="#1a4a6b"/><path d="M-9 9l4-9 5 3 4-2 5 8z" fill="#f9a52d"/></g>
<g transform="translate(717.500,0)"><path d="M-10 9L-4-3l4-7 5 7 5 12z" fill="#a6c05a" stroke="#1f4d70"/><path d="M-8 5q8-3 16 0M-6 0q6-3 12 0M-3-5q3-2 6 0" stroke="#1f4d70" fill="none" stroke-width="1.500"/></g>
<g transform="translate(747,0)"><path d="M-10 9V-1L-2 0l3-10 3 7 6 12z" fill="#a6c05a" stroke="#1f4d70"/><path d="M-10-1H10" stroke="#1f4d70" stroke-dasharray="2 1"/><path d="M-3-1h6l-3 5z" fill="#f9962d"/><path d="M1-10l4 8H-2z" fill="#5c8aa8"/></g>
<g transform="translate(777,0)"><path d="M-10 9V0l4-4 3 2 4-8 4 6 5 13z" fill="#a6c05a" stroke="#4d6a36"/><path d="M-10-4h20M-10 4h20" stroke="#234" stroke-dasharray="2 1.500"/></g>
<g transform="translate(806,0)"><path d="M-10 9L-5 1l3 2 4-3 3 2 5 7z" fill="#a6c05a" stroke="#4d6a36"/><path d="M-11-11L2-5-11 2z" fill="#f08d30"/><path d="M2-5l9-3v6z" fill="#d32020"/><circle cx="2" cy="-5" r="2" fill="#c12"/></g>
<g transform="translate(837,0)"><path d="M0-11q4 5 3 8a3 3 0 0 1-6 0q-1-3 3-8z" fill="#5b91b5" stroke="#1f4d70"/><path d="M-10 9L-4 1l5 4 4-4 5 8z" fill="#a6c05a" stroke="#4d6a36"/><path d="M-2 9l3-4 3 4z" fill="#5b91b5"/></g>
<g transform="translate(867,0)"><path d="M-11-4q6-1 8-1l3-5 5 3 3 1 2 2z" fill="#f39a3a"/><path d="M-11-3h22" stroke="#555"/><path d="M-10 3l6-1h8l6 1-4 2H-6z" fill="#6c7a3a"/><path d="M-10 9h20" stroke="#7bb4c4" stroke-width="2"/><path d="M-3-1l3 2 3-2M-3 6l3-2 3 2" stroke="#234" fill="none"/></g>
<g transform="translate(897,0)"><rect x="-10.500" y="-10.500" width="21" height="21" fill="#1a4a6b"/><rect x="-9" y="-9" width="18" height="18" fill="#5e9fbd"/><circle cx="-2" cy="-2" r="8.500" fill="#b2c84e"/><circle cx="-3" cy="-3" r="5.500" fill="#f4a63a"/></g>
<g transform="translate(927,0)"><path d="M-11-6l4-4 5 6 7-6 2 2-5 8 7 9-3 1-7-7-5 5 0 3-2-2-2-3 3 0 4-5z" fill="#12476b"/><path d="M1 4l6-5 4 4-6 5z" fill="none" stroke="#9bb" stroke-dasharray="1.500 1"/></g>
<g transform="translate(979,0)"><rect x="-10" y="-10" width="20" height="20" fill="#dfe8ec" stroke="#1a4a6b" stroke-width="1.500"/><rect x="-10" y="-10" width="20" height="5" fill="#1a4a6b"/><path d="M-2-5V10" stroke="#1a4a6b" stroke-width="2"/><rect x="-9" y="-3" width="6" height="2" fill="#1a4a6b"/><rect x="1" y="-2" width="6" height="10" fill="#a6c05a"/></g>
<g transform="translate(1009,0)"><path d="M-6 9L-2 1-10-3l17-5z" fill="#eda53c" stroke="#345"/><path d="M-8-6q7-6 14-2M6-10l1 3-3 1" fill="none" stroke="#1a4a6b" stroke-width="1.500"/></g>
<g transform="translate(1039,0)" opacity=".5"><rect x="-10" y="-6" width="8" height="12" fill="none" stroke="#7e9ab5" stroke-dasharray="2 1.500"/><rect x="1" y="-6" width="9" height="12" fill="#c7d3dc" stroke="#7e9ab5"/><path d="M-2-10V10M-1-4l5 4-5 4z" fill="#5c8aa8" stroke="#5c8aa8"/></g>
<g transform="translate(1069,0)"><path d="M-9-4L-3-10H10V4L4 10H-9z" fill="#3a7096" stroke="#1a4a6b"/><rect x="-9" y="-4" width="13" height="14" fill="#dfe9ee" stroke="#1a4a6b"/><text x="-7.500" y="6" font-size="7" fill="#1a4a6b">3D</text></g>
<g transform="translate(1099,0)"><rect x="-10" y="-10" width="11" height="11" fill="none" stroke="#234" stroke-width="1.500"/><rect x="0" y="1" width="9" height="9" fill="#dfe9ee" stroke="#234" stroke-width="1.500"/><path d="M-11 11L11-11" stroke="#234" stroke-width="1.500"/></g>
<g transform="translate(1130,0)"><path d="M-10 8V-9h5V8z" fill="#dfe9ee" stroke="#567"/><path d="M4-10q5 7 4 10a4 4 0 0 1-8 0q-1-3 4-10z" fill="#5b91b5" stroke="#1f4d70"/><path d="M-11 9q3-2 5 0t5 0 5 0 5 0 3 0" stroke="#5b91b5" fill="none"/></g>
<g transform="translate(1159,0)" opacity=".45"><path d="M-10 8V-9h5V8z" fill="#dfe9ee" stroke="#567"/><path d="M4-10q5 7 4 10a4 4 0 0 1-8 0q-1-3 4-10z" fill="#5b91b5" stroke="#1f4d70"/><path d="M-11 9q3-2 5 0t5 0 5 0 5 0 3 0" stroke="#5b91b5" fill="none"/></g>
<g transform="translate(1190,0)" opacity=".45"><path d="M-9-9V9M-11-7h6M-11-3h6M-11 1h6M8-9H2" stroke="#567" fill="none"/><circle cx="3" cy="-1" r="6" fill="#8cb7c9" stroke="#1f4d70"/></g>
<g transform="translate(1219,0)"><path d="M-10 9L-4-5l4 6 3-9 6 17z" fill="#a6c05a" stroke="#12476b" stroke-width="1.500"/><path d="M-4-5V9M3-8V9" stroke="#12476b" stroke-width="2"/><path d="M-7-11l1 3 3-1-2 2 2 3-3-1-1 3-1-3-3 1 2-3-2-2 3 1z" fill="#f08d30"/></g>
<g transform="translate(1250,0)"><path d="M-11 10L-4-8l4 8 3-9 8 19z" fill="#12476b"/><path d="M-8 10l4-9 3 9zM2 10l2-9 3 9z" fill="#a6c05a"/></g>
<g transform="translate(1451,0)"><circle r="10.500" fill="#5d8eab" stroke="#1a4a6b" stroke-width="1.500"/><path d="M-10-4H10M-11 0H11M-10 4H10M-4-10V10M0-11V11M4-10V10" stroke="#1a4a6b"/></g>
<g transform="translate(1481,0)"><circle r="8" fill="none" stroke="#12476b" stroke-width="4"/><path d="M0-11V-7M0 7V11M-11 0H-7M7 0H11M-8-8l2.500 2.500M8-8L5.500-5.500M-8 8l2.500-2.500M8 8L5.500 5.500" stroke="#12476b" stroke-width="3"/><path d="M4-3a5 5 0 1 0 0 6 4 4 0 1 1 0-6z" fill="#f6a63c"/></g>
<g transform="translate(1511,0)"><path d="M6-10a10 10 0 1 0 5 14 9 6 0 0 1-10 0 7 7 0 0 1 5-14z" fill="#f6a63c" stroke="#c77e28"/><path d="M-10 3a10 8 0 0 0 20 2 10 5 0 0 1-20-2z" fill="#12476b"/></g>
<path transform="translate(1790,0)" d="M0-10.500L3.200-3.300 11-2.700 5.200 2.400 7 10 0 6 -7 10-5.200 2.400-11-2.700-3.200-3.300z" fill="#fcbb5d" stroke="#e69530"/>
</g>

<!-- ROW 2 ICONS -->
<g transform="translate(0,106)">
<g transform="translate(24.500,0)"><use href="#p" transform="translate(5,-3)"/><g fill="#234"><circle cx="-9" cy="8" r="1.300"/><circle cx="-4" cy="4" r="1.300"/><circle cx="-1" cy="8" r="1.300"/><circle cx="4" cy="9" r="1.300"/></g></g>
<g transform="translate(55,0)"><use href="#p" transform="translate(5,-4)"/><path d="M-11 4L0 1M-11 5L6 9M-5 10H5" stroke="#234" fill="none" stroke-width="1.200"/><g fill="#1a4a6b"><circle cx="-10" cy="5" r="1.500"/><circle cx="6" cy="9" r="1.500"/></g></g>
<g transform="translate(85,0)"><use href="#p" transform="translate(5,-4)"/><path d="M-4 2q-8 1-7 5 1 3 5 1t8 1q4 0 7-3-6 0-10-1-3 0-3-3z" fill="none" stroke="#1a4a6b"/></g>
<g transform="translate(115.500,0)"><use href="#p" transform="translate(4,-4)"/><path d="M-10 3l6-5 9 4 5-2-4 9-14 2z" fill="#a6c05a" stroke="#4d6a36"/></g>
<g transform="translate(145,0)"><use href="#p" transform="translate(4,-4)"/><rect x="-7" y="1" width="8" height="8" fill="#a6c05a" stroke="#4d6a36"/></g>
<g transform="translate(175,0)"><use href="#p" transform="translate(5,-5)"/><circle cx="-1" cy="5" r="5.500" fill="#a6c05a" stroke="#4d6a36"/></g>
<g transform="translate(228,0)"><use href="#p" transform="translate(5,-4)"/><path d="M-10 9L0-3M-10 9H10" stroke="#234" fill="none"/><text x="-1" y="8" font-size="8" font-style="italic" fill="#234">X'</text></g>
<g transform="translate(258,0)"><circle cx="-1" cy="1" r="9" fill="#e8eef2" stroke="#1a4a6b" stroke-width="2"/><circle cx="-1" cy="1" r="5" fill="none" stroke="#1a4a6b" stroke-width="1.500"/><circle cx="-1" cy="1" r="2" fill="#1a4a6b"/><use href="#p" transform="translate(6,-4)"/></g>
<g transform="translate(288,0)"><use href="#p" transform="translate(4,-5)"/><rect x="-9" y="3" width="18" height="7" fill="none" stroke="#1a4a6b"/><path d="M-5 3v7M-1 3v7M3 3v7M-9 6.500H9" stroke="#1a4a6b"/></g>
<g transform="translate(318,0)"><use href="#p" transform="translate(4,-5)"/><path d="M-11 7H8M0 3v4a3 3 0 0 0 5 2" stroke="#234" fill="none"/><circle cx="-10" cy="7" r="1.500" fill="#234"/></g>
<g transform="translate(348,0)"><use href="#p" transform="translate(5,-5)"/><path d="M-10 1l8-3 2 4 8-2 1 7-11 4-8-3z" fill="#a6c05a" stroke="#4d6a36"/><path d="M-5 6h8" stroke="#234"/></g>
<g transform="translate(386,0)" opacity=".45"><use href="#p" transform="translate(5,-4)"/><path d="M-10 1l4 5 7-9" stroke="#889" fill="none"/></g>
<g transform="translate(416,0)" opacity=".45"><path d="M-9 9V0h6M-9 9H8" stroke="#667" fill="none"/><path d="M-3 1L4-8l2 3-6 7z" fill="#889"/></g>
<g transform="translate(468,0)" opacity=".55"><rect x="-4" y="-3" width="7" height="7" fill="#b9cf86"/><path d="M0-11V11M-11 0H11M0-11l-2 3h4zM0 11l-2-3h4zM-11 0l3-2v4zM11 0l-3-2v4z" fill="#5c8aa8" stroke="#5c8aa8"/></g>
<g transform="translate(498,0)" opacity=".6"><rect x="-10" y="-1" width="10" height="10" fill="#b9cf86" stroke="#567"/><rect x="-5" y="-6" width="10" height="10" fill="#d4e2ae" stroke="#567"/><path d="M-7 7L7-7M3-10q5 0 6 4M9 0V4" stroke="#1f4d70" fill="none"/></g>
<g transform="translate(528,0)"><path d="M-9 8q4-10 4-3t5-6q2-5 6-3t-2 9" stroke="#12476b" stroke-width="2" fill="none"/><g fill="#12476b"><circle cx="-9" cy="-1" r="2"/><circle cx="-9" cy="8" r="2"/><circle cx="-1" cy="-7" r="2"/><circle cx="6" cy="-9" r="2"/><circle cx="5" cy="8" r="2"/></g></g>
<g transform="translate(558,0)" opacity=".55"><circle r="2.500" fill="#9ab"/><path d="M0-11V11M-11 0H11M0-11l-2 3h4zM0 11l-2-3h4zM-11 0l3-2v4zM11 0l-3-2v4z" fill="#5c8aa8" stroke="#5c8aa8"/></g>
<g transform="translate(589,0)" opacity=".55"><path d="M-10-9L9 10" stroke="#567"/><circle cx="-1" cy="0" r="3" fill="#b9cf86" stroke="#567"/><path d="M7-9v7M3.500-5.500h7" stroke="#567"/></g>
<g transform="translate(626,0)" opacity=".6"><path d="M-9 8L7-8" stroke="#789"/><circle cx="-9" cy="8" r="1.500" fill="#567"/><circle cx="1" cy="0" r="3" fill="#f5c38c" stroke="#e0904a"/><circle cx="8" cy="-9" r="1.500" fill="#567"/></g>
<g transform="translate(656,0)" opacity=".6"><path d="M-8-10L8 8" stroke="#678"/><circle cx="-5" cy="8" r="3" fill="none" stroke="#678"/><circle cx="-10" cy="3" r="2.500" fill="none" stroke="#678"/><path d="M-3 5L3-1" stroke="#678"/></g>
<g transform="translate(686,0)"><g opacity=".7"><rect x="-1" y="-3" width="10" height="7" fill="#b9cf86" stroke="#567" transform="rotate(40 4 0)"/><circle cx="-5" cy="-8" r="1.300" fill="#567"/><circle cx="-1" cy="-10" r="1.300" fill="#567"/><path d="M-8 0a7 7 0 0 0 5 9" stroke="#345" fill="none"/></g></g>
<g transform="translate(716,0)" opacity=".7"><rect x="-9" y="-9" width="6" height="5" fill="#dfe9ee" stroke="#567" transform="rotate(40 -6 -6)"/><rect x="-2" y="-3" width="11" height="7" fill="#b9cf86" stroke="#567" transform="rotate(40 3 0)"/><path d="M-9 0a7 7 0 0 0 5 9" stroke="#345" fill="none"/></g>
<g transform="translate(747,0)" opacity=".7"><rect x="-6" y="-10" width="11" height="7" fill="#b9cf86" stroke="#567" transform="rotate(40 0 -6)"/><rect x="1" y="1" width="8" height="6" fill="#dfe9ee" stroke="#567" transform="rotate(40 5 4)"/><path d="M-9 0a7 7 0 0 0 5 9" stroke="#345" fill="none"/></g>
<g transform="translate(777,0)" opacity=".6"><rect x="-10" y="-8" width="11" height="13" fill="none" stroke="#e0904a" transform="rotate(-15)"/><rect x="-7" y="-6" width="5" height="9" fill="#b9cf86" stroke="#567" transform="rotate(-15)"/><rect x="-1" y="-4" width="11" height="13" fill="none" stroke="#e0904a" transform="rotate(-15)"/><rect x="2" y="-2" width="5" height="9" fill="#b9cf86" stroke="#567" transform="rotate(-15)"/></g>
<path transform="translate(807,0)" opacity=".4" d="M-5-11V5H11M-11-5H5V11" stroke="#789" fill="none" stroke-dasharray="2 1"/>
<g transform="translate(837,0)" opacity=".6"><path d="M-8-9l2-2L10 8l-2 3z" fill="#c0d494" stroke="#667"/><path d="M-5-8L8 7" stroke="#667"/></g>
<g transform="translate(1106,0)"><circle cx="-2" cy="-5" r="4" fill="#12476b"/><g fill="#c01f2a"><circle cx="3" cy="-1" r="1.300"/><circle cx="7" cy="2" r="1.300"/></g><path d="M-9 9H8" stroke="#5a3a1a" stroke-width="2.500" stroke-dasharray="2 1.500"/></g>
<g transform="translate(1137,0)"><path d="M-11 10L-3-2l3 4 4-6 7 14z" fill="#5a3a1a"/><circle cx="-5" cy="-6" r="4" fill="#12476b"/></g>
<g transform="translate(1166,0)"><rect x="0" y="-5" width="9" height="15" fill="#6e94ac" stroke="#234"/><path d="M2-3h2M6-3h1M2 1h2M6 1h1M2 5h2M6 5h1" stroke="#fff"/><circle cx="-5" cy="-5" r="4" fill="#12476b"/><circle cx="-5" cy="4" r="3.500" fill="#a6c05a"/><path d="M-5 4V10M-10 10h20" stroke="#345"/></g>
<g transform="translate(1196,0)"><path d="M-10-9L9-9 7 2l-6 8-5-3-5-3z" fill="#a6c05a" stroke="#4d6a36"/><path d="M-10-9H9" stroke="#234"/><circle cx="-10" cy="-9" r="1.500" fill="#234"/><circle cx="9" cy="-9" r="1.500" fill="#234"/><circle cx="3" cy="-2" r="1.500" fill="#dfe9c0"/></g>
<g transform="translate(1226,0)"><path d="M-10 10L0-10l10 20z" fill="#c0d494" stroke="#4d6a36"/><path d="M-5 0L5 10M5 0L-5 10M0-10L-5 10M0-10L5 10" stroke="#4d6a36"/></g>
<g transform="translate(1265,0)"><path d="M0-10L11 9H-11z" fill="#fff" stroke="#12476b" stroke-width="2"/><circle cy="3" r="2" fill="#12476b"/></g>
<g transform="translate(1294,0)" fill="#7a98ad"><path d="M-10-10L11 10" stroke="#12476b" stroke-width="1.500"/><circle cx="-5" cy="-7" r="1.500"/><circle cx="-1" cy="-7" r="1.500"/><circle cx="3" cy="-7" r="1.500"/><circle cx="7" cy="-7" r="1.500"/><circle cx="3" cy="-3" r="1.500"/><circle cx="7" cy="-3" r="1.500"/><circle cx="-7" cy="-2" r="1.500"/><circle cx="-7" cy="2" r="1.500"/><circle cx="-3" cy="3" r="1.500"/><circle cx="-7" cy="6" r="1.500"/><circle cx="-3" cy="7" r="1.500"/><circle cx="7" cy="1" r="1.500"/></g>
<g transform="translate(1325,0)"><circle cx="-3" cy="-7" r="4" fill="none" stroke="#d33" stroke-dasharray="1.500 1"/><circle cx="-3" cy="-7" r="1.300" fill="#c01f2a"/><circle cx="-9" cy="0" r="1.500" fill="#12476b"/><use href="#mg" transform="translate(3,4) scale(.7)"/></g>
<g transform="translate(1356,0)"><ellipse cx="-2" cy="-5" rx="8" ry="6" fill="none" stroke="#d33" stroke-dasharray="1.500 1"/><circle cx="-5" cy="-6" r="1.300" fill="#12476b"/><circle cx="0" cy="-7" r="1.300" fill="#c01f2a"/><circle cx="-9" cy="3" r="1.300" fill="#789"/><use href="#mg" transform="translate(3,5) scale(.7)"/></g>
<g transform="translate(1394,0)"><circle cx="-6" cy="-9" r="1.500" fill="#c01f2a"/><circle cx="-2" cy="-9" r="1.500" fill="#f0a030"/><circle cx="2" cy="-9" r="1.500" fill="#7a9030"/><circle cx="6" cy="-9" r="1.500" fill="#f0a030"/><path d="M-9-5H9L2 3v6H-2V3z" fill="#f5a63c" stroke="#a66a1a"/></g>
<g transform="translate(1423,0)"><rect x="-9" y="-5" width="14" height="14" fill="#dfe4e8" stroke="#789"/><rect x="-6" y="-1" width="9" height="8" fill="#a6c05a"/><path d="M-2 2L7-8l3 3L1 5z" fill="#fff" stroke="#234"/><path d="M6-9l4 4" stroke="#234" stroke-width="2"/></g>
<g transform="translate(1453,0)"><circle cx="0" cy="-5" r="4" fill="#12476b"/><path d="M-9-10L9 0M9-10L-9 0" stroke="#12476b" stroke-width="2.500"/><circle cx="1" cy="4" r="1.500" fill="#f0a030"/><circle cx="5" cy="4" r="1.500" fill="#a6c05a"/><circle cx="0" cy="9" r="1.500" fill="#5a3a1a"/><circle cx="5" cy="9" r="1.500" fill="#c01f2a"/></g>
<path transform="translate(1506,0)" d="M-10 10L-6-2l2 2L0-6l1-5 3 7 2 3 4 11z" fill="#5a3a1a"/>
<g transform="translate(1536,0)"><path d="M-10 10H10" stroke="#1a4a6b" stroke-width="2"/><path d="M-6 9q-1-8-3-10 3 2 4 6 0-8-1-11 3 4 3 10 1-9 3-12 0 8 0 13 1-4 3-6 0 5-1 10z" fill="#92ad50" stroke="#5a7a30" stroke-width=".5"/></g>
<g transform="translate(1566,0)"><path d="M-10 10H10" stroke="#1a4a6b" stroke-width="2"/><path d="M-8 4q-2-6 3-7 1-5 6-3 5 0 4 4 4 3 0 7-1 3-6 2-5 1-7-3z" fill="#a6c05a" stroke="#4d6a36"/><path d="M0 4v5" stroke="#5a3a1a" stroke-width="2"/></g>
<g transform="translate(1596,0)"><path d="M-10 10H10" stroke="#1a4a6b" stroke-width="2"/><path d="M-9-3q-1-6 4-7 3-4 8-2 6 1 5 6 3 5-2 7-4 2-8 1-6 0-7-5z" fill="#a6c05a" stroke="#4d6a36"/><path d="M0 10V-2M0 3l-4-4M0 5l4-5" stroke="#5a3a1a" stroke-width="1.600"/></g>
<g transform="translate(1626,0)"><path d="M-10 10H10" stroke="#1a4a6b" stroke-width="2"/><rect x="-7" y="-11" width="14" height="21" fill="#6e94ac" stroke="#12476b"/><path d="M-4-8h1M0-8h1M4-8h1M-4-4h1M0-4h1M4-4h1M-4 0h1M0 0h1M4 0h1M-4 4h1M4 4h1" stroke="#12476b" stroke-width="2"/></g>
<g transform="translate(1656,0)"><path d="M-10 10H10" stroke="#1a4a6b" stroke-width="2"/><path d="M0-11V10M-3-8h6" stroke="#f0a030" stroke-width="2"/><path d="M-11-5q6 2 11-1 5 3 11 1M-11 0q6 2 11-1 5 3 11 1M-11 5q6 2 11-1 5 3 11 1" stroke="#5c8aa8" fill="none"/></g>
<g transform="translate(1686,0)"><path d="M0-10q5 7 4 10a4 4 0 0 1-8 0q-1-3 4-10z" fill="#5b91b5" stroke="#1f4d70"/><path d="M-10 9q2-2 4 0t4 0 4 0 4 0 4 0" stroke="#1a4a6b" fill="none"/></g>
<g transform="translate(1716,0)"><circle cx="-2" cy="-8" r="1.600" fill="#c01f2a"/><circle cx="3" cy="-4" r="1.600" fill="#c01f2a"/><path d="M-10 8H10" stroke="#5a3a1a" stroke-width="3.500" stroke-dasharray="2.500 1"/></g>
<g transform="translate(1746,0)"><path d="M-10 10H10" stroke="#1a4a6b" stroke-width="2"/><circle cx="4" cy="-6" r="4.500" fill="none" stroke="#4c7fa0" stroke-width="2.500"/><path d="M1-3L-8 6M-6 4l3 3M-3 1l3 3" stroke="#4c7fa0" stroke-width="2.500"/></g>
</g>

<!-- Control center -->
<rect x="0" y="125" width="447" height="895" fill="#fff"/>
<rect x="0" y="125" width="447" height="18" fill="#d8dbe3"/>
<rect x="0" y="143" width="447" height="32" fill="url(#tb)"/>
<path d="M0.500 125V1020M446.500 143V1020" stroke="#a0a0a0"/>
<text x="4" y="137" font-size="11.500" fill="#555" textLength="125" lengthAdjust="spacingAndGlyphs">Control Center (1 Layers)</text>
<path d="M399 136h6" stroke="#8a8e96" stroke-width="2"/>
<rect x="416.500" y="129.500" width="8" height="8" fill="none" stroke="#8a8e96"/>
<path d="M433 129l8 9M441 129l-8 9" stroke="#8a8e96" fill="none"/>
<g transform="translate(0,158)">
<g transform="translate(15,0)"><use href="#f"/><path d="M5 3l6 7" stroke="#2c5c7a" stroke-width="3"/><circle cx="3" cy="1" r="3.500" fill="none" stroke="#2c5c7a" stroke-width="2"/></g>
<g transform="translate(45,0)"><use href="#f"/><rect x="1" y="-2" width="10" height="13" fill="#e8eef2" stroke="#2c5c7a"/><path d="M3 2h6M3 5h6M3 8h6" stroke="#2c5c7a"/></g>
<g transform="translate(75.500,0)"><use href="#f"/><circle cx="5" cy="4" r="6" fill="#e3edf2" stroke="#2c5c7a" stroke-width="1.500"/><path d="M2.500 1.500l5 5M7.500 1.500l-5 5" stroke="#2c5c7a"/></g>
<g transform="translate(105,0)"><use href="#f"/><rect x="-2" y="-3" width="13" height="14" fill="none" stroke="#2c5c7a" stroke-dasharray="2 1.500"/></g>
<g transform="translate(135.500,0)"><use href="#f"/><circle cx="4" cy="3" r="4.500" fill="#e3edf2" stroke="#2c5c7a" stroke-width="2"/><path d="M7 6l4 5" stroke="#2c5c7a" stroke-width="2.500"/></g>
<g transform="translate(165,0)"><use href="#f"/><path d="M-3 5q7-7 15 0-8 7-15 0z" fill="#e3edf2" stroke="#2c5c7a"/><circle cx="4.500" cy="5" r="2.500" fill="#2c5c7a"/></g>
</g>

<!-- tree -->
<path d="M12 186h12M30.500 197V206H42" stroke="#888" stroke-dasharray="1 1" fill="none"/>
<rect x="8.500" y="182.500" width="8" height="8" fill="#eee" stroke="#888"/><path d="M10 186.500h5" stroke="#223"/>
<rect x="24.500" y="180.500" width="11" height="11" fill="#fff" stroke="#000"/><use href="#chk" transform="translate(30,186)"/>
<use href="#lay" transform="translate(45,186)"/>
<text x="58" y="190" font-size="12" fill="#000" textLength="112" lengthAdjust="spacingAndGlyphs">Current Workspace</text>
<rect x="43.500" y="200.500" width="11" height="11" fill="#fff" stroke="#000"/><use href="#chk" transform="translate(49,206)"/>
<use href="#lay" transform="translate(63,206)"/>
<rect x="75.500" y="196" width="242" height="20" fill="#0078d7"/>
<text x="77" y="210" font-size="12" fill="#fff" textLength="239" lengthAdjust="spacingAndGlyphs">一张蓝图成果2000系.shp [16,376 Features]</text>

<!-- status bar -->
<rect x="0" y="1020" width="1919" height="20" fill="url(#sb)"/>
<path d="M1452 1023V1040M1490 1023V1040M1722 1023V1040" stroke="#8a8e96"/>
<text class="sb" x="5" y="1036" textLength="259" lengthAdjust="spacingAndGlyphs">&lt;NO LABEL&gt; Unknown Area Type [0.0000000000 m]</text>
<text class="sb" x="1456" y="1036" textLength="32" lengthAdjust="spacingAndGlyphs">1:5991</text>
<text class="sb" x="1495" y="1036" textLength="224" lengthAdjust="spacingAndGlyphs">GK3 ( WGS84 ) ( 36538255.161, 3405777.260 )</text>
<text class="sb" x="1726" y="1036" textLength="191" lengthAdjust="spacingAndGlyphs">30° 46' 19.6050" N, 108° 23' 58.5997" E</text>

<!-- taskbar -->
<rect x="0" y="1040" width="1928" height="8" fill="#223945"/>
<rect x="1000" y="1040" width="928" height="8" fill="#1b2a40"/>
<rect x="637" y="1040" width="46" height="8" fill="#475f68"/>
<text x="1868" y="1054" font-size="12" fill="#fff" textLength="29" lengthAdjust="spacingAndGlyphs">11:48</text>
</svg>
</body></html>
